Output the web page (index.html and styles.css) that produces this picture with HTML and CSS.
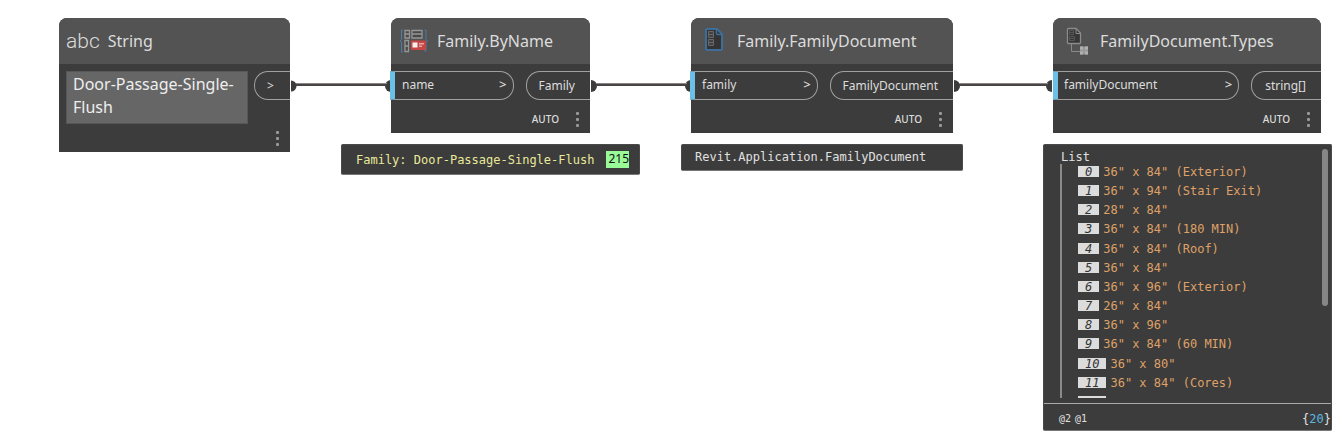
FILE: index.html
```html
<!DOCTYPE html>
<html lang="en">
<head>
<meta charset="utf-8">
<title>Family types graph</title>
<link rel="stylesheet" href="styles.css">
</head>
<body>
<main class="canvas">
  <svg class="wires" aria-hidden="true">
    <g fill="#3c3c3c">
      <path d="M291 80.500a5.500 5.500 0 0 1 0 11z"/><path d="M391 80a6 6 0 0 0 0 12z"/>
      <path d="M591 80a6 6 0 0 1 0 12z"/><path d="M691 80a6 6 0 0 0 0 12z"/>
      <path d="M954 80a6 6 0 0 1 0 12z"/><path d="M1052 80a6 6 0 0 0 0 12z"/>
    </g>
    <g fill="#888585"><path d="M296 83h91v1h-91zM596 83h91v1h-91zM959 83h89v1h-89z"/></g>
    <g fill="#484444"><path d="M296 84h91v2h-91zM596 84h91v2h-91zM959 84h89v2h-89z"/></g>
  </svg>

  <section class="node node-string">
    <header class="node-header"><span class="abc">abc</span><h2 class="title">String</h2></header>
    <div class="ports">
      <textarea class="string-value" aria-label="String value" rows="2" spellcheck="false">Door-Passage-Single-Flush</textarea>
      <button class="port port-out port-arrow" type="button" aria-label="Output">&gt;</button>
    </div>
    <footer class="node-footer"><button class="more" type="button" aria-label="More options"><i></i><i></i><i></i></button></footer>
  </section>

  <section class="node node-byname">
    <header class="node-header">
      <svg class="icon" viewBox="0 0 40 40" aria-hidden="true">
        <g fill="#484848" stroke="#969696" stroke-width="1.300"><path d="M10 9.500h4.500v7.500H10zM10 13h4.500M17 9.500h10v7.500H17zM17 13h10M10 19.500h3.500v11H10zM10 25h3.500"/></g>
        <path d="M8 9H6.500v9.500L5 20l1.500 1.500V31H8M29.500 9H31v9.500l1.500 1.500-1.500 1.500V30H29.500" fill="none" stroke="#4c7da8"/>
        <path d="M16 19.500h15V29H16z" fill="#c64646"/><path d="M17.500 21.500h5v5h-5z" fill="#f7eeee"/><path d="M24 22h5v1.500h-5zM24 24.500h3v1.500h-3z" fill="#e3a8a8"/>
      </svg>
      <h2 class="title">Family.ByName</h2>
    </header>
    <div class="ports">
      <button class="port port-in" type="button"><span>name</span><span class="chevron">&gt;</span></button>
      <button class="port port-out" type="button">Family</button>
    </div>
    <footer class="node-footer"><span class="lacing">AUTO</span><button class="more" type="button" aria-label="More options"><i></i><i></i><i></i></button></footer>
  </section>
  <div class="preview preview-family"><span>Family: Door-Passage-Single-Flush</span><a class="element-id" href="#">215</a></div>

  <section class="node node-document">
    <header class="node-header">
      <svg class="icon" viewBox="0 0 40 40" aria-hidden="true">
        <path d="M12 8h10l5 5v15q0 1-1 1H12q-1 0-1-1V9q0-1 1-1z" fill="#343434" stroke="#3e6d99" stroke-width="2"/>
        <path d="M21.500 8v4.500q0 1 1 1H27" fill="none" stroke="#3e6d99" stroke-width="1.500"/>
        <g fill="#424242" stroke="#686868"><path d="M13.500 10.500h5v6h-5zM13.500 13.500h5M13.500 18.500h5v6h-5zM13.500 21.500h5"/></g>
      </svg>
      <h2 class="title">Family.FamilyDocument</h2>
    </header>
    <div class="ports">
      <button class="port port-in" type="button"><span>family</span><span class="chevron">&gt;</span></button>
      <button class="port port-out" type="button">FamilyDocument</button>
    </div>
    <footer class="node-footer"><span class="lacing">AUTO</span><button class="more" type="button" aria-label="More options"><i></i><i></i><i></i></button></footer>
  </section>
  <div class="preview preview-document">Revit.Application.FamilyDocument</div>

  <section class="node node-types">
    <header class="node-header">
      <svg class="icon" viewBox="0 0 40 40" aria-hidden="true">
        <path d="M9.500 7.500H17l4.500 4.500v9.500q0 1-1 1h-11q-1 0-1-1v-13q0-1 1-1z" fill="#373737" stroke="#8c8c8c" stroke-width="1.300"/>
        <path d="M17 8v4.500h4.500" fill="none" stroke="#8c8c8c"/>
        <g fill="none" stroke="#565656"><path d="M10.500 9.500h4v4h-4zM10.500 15.500h5v4h-5zM10.500 11.500h4M10.500 17.500h5"/></g>
        <path d="M12.500 23v7.500H21" fill="none" stroke="#898989"/>
        <path d="M21 25.500h8v8h-8z" fill="#989898"/><path d="M21 25.500h3v3h-3zM26 25.500h3v3h-3zM21 30.500h3v3h-3zM26 30.500h3v3h-3z" fill="#b0b0b0"/>
      </svg>
      <h2 class="title">FamilyDocument.Types</h2>
    </header>
    <div class="ports">
      <button class="port port-in" type="button"><span>familyDocument</span><span class="chevron">&gt;</span></button>
      <button class="port port-out" type="button">string[]</button>
    </div>
    <footer class="node-footer"><span class="lacing">AUTO</span><button class="more" type="button" aria-label="More options"><i></i><i></i><i></i></button></footer>
  </section>
  <div class="preview preview-list">
    <div class="list-area">
      <div class="list-main">
        <div class="list-title">List</div>
        <div class="list-clip">
          <ol class="items">
            <li><em>0</em>36" x 84" (Exterior)</li>
            <li><em>1</em>36" x 94" (Stair Exit)</li>
            <li><em>2</em>28" x 84"</li>
            <li><em>3</em>36" x 84" (180 MIN)</li>
            <li><em>4</em>36" x 84" (Roof)</li>
            <li><em>5</em>36" x 84"</li>
            <li><em>6</em>36" x 96" (Exterior)</li>
            <li><em>7</em>26" x 84"</li>
            <li><em>8</em>36" x 96"</li>
            <li><em>9</em>36" x 84" (60 MIN)</li>
            <li><em>10</em>36" x 80"</li>
            <li><em>11</em>36" x 84" (Cores)</li>
            <li><em class="next"></em></li>
          </ol>
        </div>
      </div>
      <div class="scroll-thumb"></div>
    </div>
    <div class="list-footer"><span class="levels"><span>@2</span><span>@1</span></span><span class="count">{<b>20</b>}</span></div>
  </div>
</main>
</body>
</html>
```
FILE: styles.css
```css
* { box-sizing: border-box; }
body { margin: 0; background: #fff; font-family: "Noto Sans", sans-serif; }
button, textarea { font: inherit; color: inherit; }
.canvas { position: relative; min-height: 100vh; overflow: hidden; }
.wires { position: absolute; inset: 0; width: 100%; height: 100%; }

.node { position: absolute; top: 18px; background: #3c3c3c; color: #dcdcdc; border-radius: 8px 8px 0 0; }
.node-string { left: 59px; width: 231px; }
.node-byname { left: 391px; width: 199px; }
.node-document { left: 691px; width: 262px; }
.node-types { left: 1053px; width: 268px; }

.node-header { display: flex; align-items: center; height: 46px; padding: 0 6px; background: #535353; border-radius: 8px 8px 0 0; }
.title { margin: 0; font-size: 16px; font-weight: 400; line-height: 24px; }
.icon { width: 40px; height: 40px; flex: none; margin-left: -2px; margin-right: 2px; }
.node-types .icon { margin-left: 0; margin-right: 1px; }
.abc { font-family: Roboto, sans-serif; font-weight: 300; font-size: 21px; line-height: 24px; padding-left: 1px; margin-right: 8px; }

.ports { display: flex; justify-content: space-between; gap: 12px; padding-top: 7px; align-items: flex-start; }
.port { height: 29px; border: 1px solid #a0a0a0; background: none; font-size: 12px; line-height: 27px; padding: 0; white-space: nowrap; }
.port-in { flex: 1; display: flex; justify-content: space-between; border-left: 5px solid #6ac0e7; border-radius: 0 14px 14px 0; margin-left: -1px; padding: 0 6px 0 7px; line-height: 25px; }
.chevron { font-size: 13px; font-weight: 500; }
.port-out { border-right: 0; border-radius: 14px 0 0 14px; padding: 0 15px 0 12px; }
.node-types .port-in { margin-left: 0; padding-left: 6px; }
.node-types .port-out { padding-left: 13px; }
.port-arrow { width: 36px; text-align: left; }
.string-value { flex: 1; min-width: 0; height: 53px; margin-left: 7px; margin-right: -6px; border: 1px solid #575757; background: #666; padding: 1px 6px; font-size: 16px; line-height: 23px; resize: none; overflow: hidden; color: #eee; }

.node-footer { display: flex; justify-content: flex-end; align-items: center; gap: 13px; height: 33px; padding: 5px 8px 0 0; }
.node-string .node-footer { height: 28px; padding-top: 0; }
.lacing { font-size: 10px; line-height: 14px; font-weight: 500; }
.more { display: flex; flex-direction: column; align-items: center; gap: 3px; width: 10px; padding: 0; border: 0; background: none; }
.more i { width: 3px; height: 3px; border-radius: 1px; background: #999; }

.preview { position: absolute; top: 144px; background: #3c3c3c; color: #e0e0e0; font: 12px/16px "DejaVu Sans Mono", monospace; border: 1px solid #4a4a4a; border-bottom-color: #777; border-radius: 2px; white-space: nowrap; }
.preview-family { left: 341px; width: 299px; display: flex; align-items: center; gap: 12px; padding: 6px 14px; color: #e9e99a; }
.element-id { background: #98fb98; color: #111; text-decoration: none; height: 17px; line-height: 16px; padding-left: 2px; font-family: "Noto Sans", sans-serif; }
.preview-document { left: 681px; width: 282px; padding: 4px 13px 5px; }
.preview-list { left: 1043px; width: 289px; }
.list-area { display: flex; justify-content: space-between; padding: 4px 3px 0 17px; }
.list-main { flex: 1; }
.list-title { height: 15px; }
.list-clip { height: 234px; border-left: 2px solid #8a8a8a; margin-left: -1px; padding: 2px 0 0 16px; overflow: hidden; }
.items { list-style: none; margin: 0; padding: 0; height: 241px; display: flex; flex-direction: column; justify-content: space-between; color: #dfa167; }
.items li { display: flex; gap: 4px; height: 11px; line-height: 12px; }
.items em { height: 11px; background: #dcdcdc; color: #333; padding: 0 7px; }
.items .next { width: 28px; }
.scroll-thumb { width: 6px; height: 157px; border-radius: 3px; background: #868686; }
.list-footer { display: flex; justify-content: space-between; align-items: center; height: 27px; margin-top: 5px; padding: 3px 0 0 15px; border-top: 1px solid #aaa; }
.levels { display: flex; gap: 4px; font-size: 10px; }
.count b { color: #5cb8e0; font-weight: 400; }
```
